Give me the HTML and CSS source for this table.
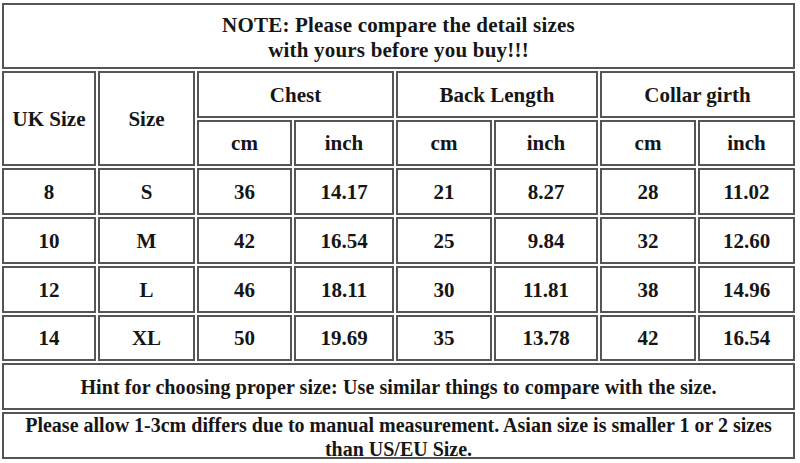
FILE: index.html
```html
<!DOCTYPE html>
<html>
<head>
<meta charset="utf-8">
<link rel="stylesheet" href="styles.css">
</head>
<body>
<div class="chart">
  <div class="cell note span-all">NOTE: Please compare the detail sizes<br>with yours before you buy!!!</div>

  <div class="cell rowspan2">UK Size</div>
  <div class="cell rowspan2">Size</div>
  <div class="cell colspan2">Chest</div>
  <div class="cell colspan2">Back Length</div>
  <div class="cell colspan2">Collar girth</div>

  <div class="cell">cm</div>
  <div class="cell">inch</div>
  <div class="cell">cm</div>
  <div class="cell">inch</div>
  <div class="cell">cm</div>
  <div class="cell">inch</div>

  <div class="cell">8</div><div class="cell">S</div><div class="cell">36</div><div class="cell">14.17</div><div class="cell">21</div><div class="cell">8.27</div><div class="cell">28</div><div class="cell">11.02</div>
  <div class="cell">10</div><div class="cell">M</div><div class="cell">42</div><div class="cell">16.54</div><div class="cell">25</div><div class="cell">9.84</div><div class="cell">32</div><div class="cell">12.60</div>
  <div class="cell">12</div><div class="cell">L</div><div class="cell">46</div><div class="cell">18.11</div><div class="cell">30</div><div class="cell">11.81</div><div class="cell">38</div><div class="cell">14.96</div>
  <div class="cell">14</div><div class="cell">XL</div><div class="cell">50</div><div class="cell">19.69</div><div class="cell">35</div><div class="cell">13.78</div><div class="cell">42</div><div class="cell">16.54</div>

  <div class="cell hint span-all">Hint for choosing proper size: Use similar things to compare with the size.</div>
  <div class="cell footer span-all">Please allow 1-3cm differs due to manual measurement. Asian size is smaller 1 or 2 sizes<br>than US/EU Size.</div>
</div>
</body>
</html>
```

FILE: styles.css
```css
html, body {
  margin: 0;
  padding: 0;
  background: #ffffff;
}

body {
  padding: 3px 0 0 2px;
  font-family: "Liberation Serif", "Times New Roman", serif;
}

.chart {
  display: grid;
  grid-template-columns: 94px 97px 95px 100px 96px 104px 96px 97px;
  grid-template-rows: 66px 47px 46px 47px 47px 47px 46px 47px 47px;
  gap: 2px;
  width: 793px;
}

.cell {
  box-sizing: border-box;
  border: 2px solid #555555;
  display: flex;
  align-items: center;
  justify-content: center;
  text-align: center;
  font-weight: bold;
  font-size: 21px;
  color: #161616;
  line-height: 24px;
}

.span-all {
  grid-column: 1 / -1;
}

.rowspan2 {
  grid-row: span 2;
}

.colspan2 {
  grid-column: span 2;
}

.note {
  line-height: 25px;
  padding-top: 4px;
  letter-spacing: 0.2px;
}

.hint {
  font-size: 20px;
  letter-spacing: 0.1px;
}

.footer {
  font-size: 20px;
  line-height: 24px;
  padding-top: 2px;
}
```
